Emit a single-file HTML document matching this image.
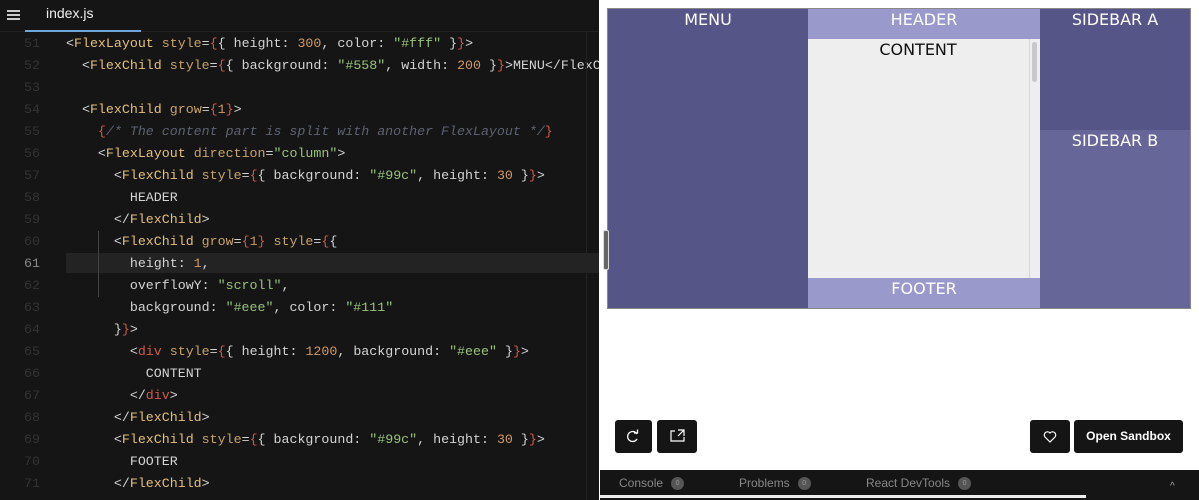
<!DOCTYPE html><html><head><style>
body{margin:0;width:1199px;height:500px;overflow:hidden;background:#fff;font-family:"Liberation Sans",sans-serif;position:relative}
#ed{position:absolute;left:0;top:0;width:599px;height:500px;background:#151515;overflow:hidden}
#tabs{height:31px;border-bottom:1px solid #222;position:relative}
.ln{position:absolute;left:0;width:599px;height:22px;font:13.3px/22px "Liberation Mono",monospace;color:#d4d4d4;white-space:pre}
.ln .n{position:absolute;left:14px;width:26px;text-align:right;color:#333}
.ln .c{position:absolute;left:66px}
.t{color:#e5c07b}.a{color:#c9a26a}.b{color:#d05a4a}.s{color:#98c379}.m{color:#d19a66}.cm{color:#5c6370;font-style:italic}.p{color:#d4d4d4}
#prev{position:absolute;left:600px;top:0;width:599px;height:470px;background:#fff}
.lbl{color:#fff;font:16px "DejaVu Sans",sans-serif;text-align:center;padding-top:1px}
.btn{position:absolute;top:420px;height:33px;background:#151515;border-radius:3px;color:#fff}
#bot{position:absolute;left:600px;top:470px;width:599px;height:30px;background:#151515;font:12px "Liberation Sans",sans-serif;color:#888}
.bd{display:inline-block;width:13px;height:13px;border-radius:50%;background:#555;color:#999;font-size:7px;line-height:13px;text-align:center;vertical-align:middle;margin-left:8px}
</style></head><body>
<div id="ed">
<div id="tabs">
<div style="position:absolute;left:7px;top:10px;width:13px;height:2px;background:#ccc;box-shadow:0 4px 0 #ccc,0 8px 0 #ccc"></div>
<div style="position:absolute;left:46px;top:5px;color:#eee;font-size:14px">index.js</div>
<div style="position:absolute;left:25px;top:30px;width:116px;height:2px;background:#6fa5d8"></div>
</div>
<div style="position:absolute;left:66px;top:253px;width:533px;height:20px;background:#232323"></div>
<div style="position:absolute;left:98px;top:231px;width:1px;height:66px;background:#444"></div>
<div class="ln" style="top:33px"><span class="n">51</span><span class="c">&lt;<span class="t">FlexLayout</span> <span class="a">style</span>=<span class="b">{</span>{ height: <span class="m">300</span>, color: <span class="s">"#fff"</span> }<span class="b">}</span>&gt;</span></div>
<div class="ln" style="top:55px"><span class="n">52</span><span class="c">  &lt;<span class="t">FlexChild</span> <span class="a">style</span>=<span class="b">{</span>{ background: <span class="s">"#558"</span>, width: <span class="m">200</span> }<span class="b">}</span>&gt;MENU&lt;/FlexChild&gt;</span></div>
<div class="ln" style="top:77px"><span class="n">53</span></div>
<div class="ln" style="top:99px"><span class="n">54</span><span class="c">  &lt;<span class="t">FlexChild</span> <span class="a">grow</span>=<span class="b">{</span><span class="m">1</span><span class="b">}</span>&gt;</span></div>
<div class="ln" style="top:121px"><span class="n">55</span><span class="c">    <span class="b">{</span><span class="cm">/* The content part is split with another FlexLayout */</span><span class="b">}</span></span></div>
<div class="ln" style="top:143px"><span class="n">56</span><span class="c">    &lt;<span class="t">FlexLayout</span> <span class="a">direction</span>=<span class="s">"column"</span>&gt;</span></div>
<div class="ln" style="top:165px"><span class="n">57</span><span class="c">      &lt;<span class="t">FlexChild</span> <span class="a">style</span>=<span class="b">{</span>{ background: <span class="s">"#99c"</span>, height: <span class="m">30</span> }<span class="b">}</span>&gt;</span></div>
<div class="ln" style="top:187px"><span class="n">58</span><span class="c">        HEADER</span></div>
<div class="ln" style="top:209px"><span class="n">59</span><span class="c">      &lt;/<span class="t">FlexChild</span>&gt;</span></div>
<div class="ln" style="top:231px"><span class="n">60</span><span class="c">      &lt;<span class="t">FlexChild</span> <span class="a">grow</span>=<span class="b">{</span><span class="m">1</span><span class="b">}</span> <span class="a">style</span>=<span class="b">{</span>{</span></div>
<div class="ln" style="top:253px"><span class="n" style="color:#888">61</span><span class="c">        height: <span class="m">1</span>,</span></div>
<div class="ln" style="top:275px"><span class="n">62</span><span class="c">        overflowY: <span class="s">"scroll"</span>,</span></div>
<div class="ln" style="top:297px"><span class="n">63</span><span class="c">        background: <span class="s">"#eee"</span>, color: <span class="s">"#111"</span></span></div>
<div class="ln" style="top:319px"><span class="n">64</span><span class="c">      }<span class="b">}</span>&gt;</span></div>
<div class="ln" style="top:341px"><span class="n">65</span><span class="c">        &lt;<span class="b">div</span> <span class="a">style</span>=<span class="b">{</span>{ height: <span class="m">1200</span>, background: <span class="s">"#eee"</span> }<span class="b">}</span>&gt;</span></div>
<div class="ln" style="top:363px"><span class="n">66</span><span class="c">          CONTENT</span></div>
<div class="ln" style="top:385px"><span class="n">67</span><span class="c">        &lt;/<span class="b">div</span>&gt;</span></div>
<div class="ln" style="top:407px"><span class="n">68</span><span class="c">      &lt;/<span class="t">FlexChild</span>&gt;</span></div>
<div class="ln" style="top:429px"><span class="n">69</span><span class="c">      &lt;<span class="t">FlexChild</span> <span class="a">style</span>=<span class="b">{</span>{ background: <span class="s">"#99c"</span>, height: <span class="m">30</span> }<span class="b">}</span>&gt;</span></div>
<div class="ln" style="top:451px"><span class="n">70</span><span class="c">        FOOTER</span></div>
<div class="ln" style="top:473px"><span class="n">71</span><span class="c">      &lt;/<span class="t">FlexChild</span>&gt;</span></div>
<div style="position:absolute;left:586px;top:32px;width:1px;height:468px;background:#222"></div>
</div>
<div id="prev">
<div style="position:absolute;left:7px;top:8px;width:584px;height:301px;border:1px solid #888;box-sizing:border-box;display:flex">
<div class="lbl" style="width:200px;background:#558">MENU</div>
<div style="width:232px;display:flex;flex-direction:column">
<div class="lbl" style="height:30px;background:#99c;box-sizing:border-box">HEADER</div>
<div style="flex:1;background:#eee;position:relative"><div class="lbl" style="color:#111;width:220px">CONTENT</div>
<div style="position:absolute;right:0;top:0;width:10px;height:100%;border-left:1px solid #d8d8d8;background:#eee"></div>
<div style="position:absolute;right:3px;top:3px;width:5px;height:40px;border-radius:3px;background:#c8c8c8"></div></div>
<div class="lbl" style="height:30px;background:#99c;box-sizing:border-box">FOOTER</div>
</div>
<div style="flex:1;display:flex;flex-direction:column">
<div class="lbl" style="height:120px;background:#558">SIDEBAR A</div>
<div class="lbl" style="flex:1;background:#669">SIDEBAR B</div>
</div>
</div>
<div style="position:absolute;left:3px;top:230px;width:4px;height:38px;background:#666;border-radius:2px;border:1px solid #ddd"></div>
</div>
<div class="btn" style="left:615px;width:37px"><svg width="37" height="33"><path d="M22 14a5 5 0 1 0 0 5" fill="none" stroke="#fff" stroke-width="1.3"/><path d="M19 13h3.5v-3.5" fill="none" stroke="#fff" stroke-width="1.3"/></svg></div>
<div class="btn" style="left:657px;width:40px"><svg width="40" height="33"><path d="M18 11h-4v10h13v-4M21 10h6v6M27 10l-6 6" fill="none" stroke="#fff" stroke-width="1.2"/></svg></div>
<div class="btn" style="left:1030px;width:40px"><svg width="40" height="33"><path d="M20 22l-5-5a3 3 0 0 1 5-4a3 3 0 0 1 5 4z" fill="none" stroke="#fff" stroke-width="1.2"/></svg></div>
<div class="btn" style="left:1074px;width:109px;font:bold 12px/33px 'Liberation Sans',sans-serif;text-align:center">Open Sandbox</div>
<div id="bot">
<div style="position:absolute;left:19px;top:6px">Console<span class="bd">0</span></div>
<div style="position:absolute;left:139px;top:6px">Problems<span class="bd">0</span></div>
<div style="position:absolute;left:266px;top:6px">React DevTools<span class="bd">0</span></div>
<div style="position:absolute;left:0;top:25px;width:486px;height:3px;background:#eee"></div>
<div style="position:absolute;left:570px;top:11px;color:#aaa;font-size:10px">^</div>
</div>
</body></html>
